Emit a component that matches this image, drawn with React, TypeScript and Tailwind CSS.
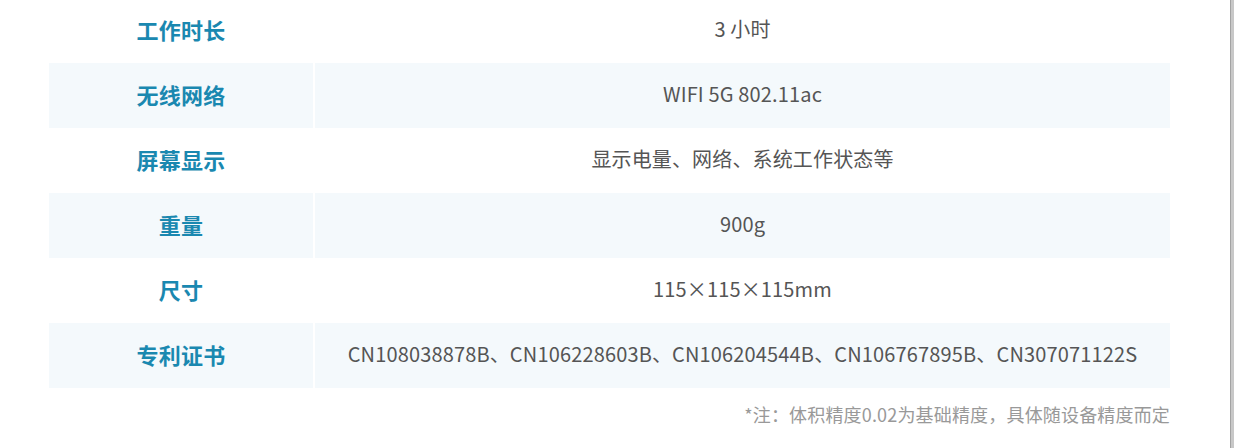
const rows: { label: string; value: string }[] = [
  { label: "工作时长", value: "3 小时" },
  { label: "无线网络", value: "WIFI 5G 802.11ac" },
  { label: "屏幕显示", value: "显示电量、网络、系统工作状态等" },
  { label: "重量", value: "900g" },
  { label: "尺寸", value: "115×115×115mm" },
  {
    label: "专利证书",
    value:
      "CN108038878B、CN106228603B、CN106204544B、CN106767895B、CN307071122S",
  },
];

export default function App() {
  return (
    <div
      className="flex h-[448px] w-full overflow-hidden bg-white"
      style={{ fontFamily: '"Noto Sans CJK SC", "Noto Sans", sans-serif' }}
    >
      <div className="flex-1">
        <div className="ml-[49px] -mt-[2px] w-[1121px]">
          {rows.map((row, i) => (
            <div key={row.label} className="grid grid-cols-[264px_1fr] gap-x-[2px]">
              <div
                className={`flex h-[65px] items-center justify-center pb-[3px] text-[22px] font-bold tracking-[0.3px] text-[#1a88b0] ${
                  i % 2 === 1 ? "bg-[#f4f9fc]" : ""
                }`}
              >
                {row.label}
              </div>
              <div
                className={`flex h-[65px] items-center justify-center pb-[3px] text-[20px] tracking-[0.15px] text-[#555555] ${
                  i % 2 === 1 ? "bg-[#f4f9fc]" : ""
                }`}
              >
                {row.value}
              </div>
            </div>
          ))}
          <p className="mt-[13px] text-right text-[18px] tracking-[0.17px] text-[#999999]">
            *注：体积精度0.02为基础精度，具体随设备精度而定
          </p>
        </div>
      </div>
      <div className="w-[4px] border-l border-[#a3a3a3] bg-[#c8c8c8]" />
    </div>
  );
}
